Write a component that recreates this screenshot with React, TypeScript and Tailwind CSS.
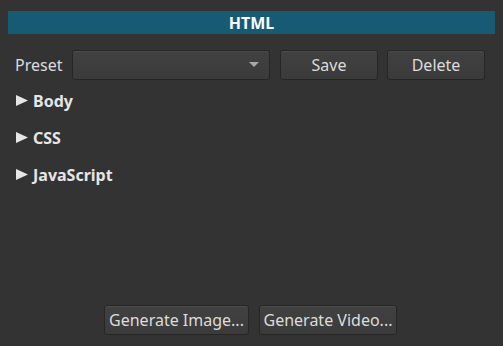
export default function App() {
  const btn =
    "h-[30px] rounded-[3px] border border-[#262626] bg-[linear-gradient(#414141,#3b3b3b)] shadow-[inset_0_1px_0_rgba(255,255,255,0.06)] text-[16px] text-[#dcdcdc] flex items-center justify-center";
  return (
    <div
      className="w-[503px] h-[346px] bg-[#333333] text-[#dcdcdc] flex flex-col"
      style={{ fontFamily: '"Noto Sans", sans-serif' }}
    >
      {/* Header */}
      <div className="mt-[11px] mx-[8px] h-[23px] bg-[#175a73] flex items-center justify-center">
        <span className="text-[16px] font-bold text-white leading-none">HTML</span>
      </div>

      {/* Preset row */}
      <div className="mt-[16px] flex items-center pl-[15px]">
        <span className="text-[16px] w-[57px]">Preset</span>
        <div className={btn + " w-[198px] justify-end pr-[10px]"}>
          <svg width="10" height="6" viewBox="0 0 10 6">
            <path d="M0 0 L10 0 L5 5 Z" fill="#a8a8a8" />
          </svg>
        </div>
        <div className={btn + " w-[98px] ml-[10px]"}>Save</div>
        <div className={btn + " w-[98px] ml-[9px]"}>Delete</div>
      </div>

      {/* Sections */}
      <div className="mt-[2px] flex flex-col pl-[16px]">
        {["Body", "CSS", "JavaScript"].map((s) => (
          <div key={s} className="h-[37px] flex items-center gap-[4px]">
            <svg width="13" height="13" viewBox="0 0 13 13">
              <path d="M0 1 L12 6.5 L0 12 Z" fill="#e6e6e6" />
            </svg>
            <span className="text-[16px] font-bold text-[#e6e6e6]">{s}</span>
          </div>
        ))}
      </div>

      {/* Bottom buttons */}
      <div className="mt-auto mb-[11px] flex pl-[104px] gap-[10px]">
        <div className={btn + " w-[145px]"}>Generate Image...</div>
        <div className={btn + " w-[138px]"}>Generate Video...</div>
      </div>
    </div>
  );
}
